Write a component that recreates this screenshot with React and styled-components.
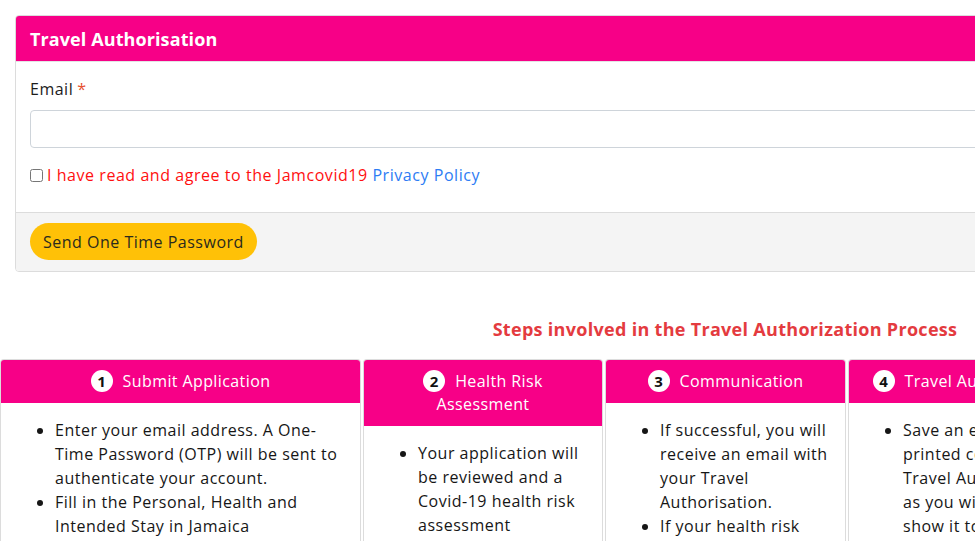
import React from "react";
import styled, { createGlobalStyle } from "styled-components";

const GlobalStyle = createGlobalStyle`
  html, body { margin: 0; padding: 0; background: #fff; }
  body {
    overflow: hidden;
    font-family: "Open Sans", "Noto Sans", Arial, sans-serif;
    color: #212529;
  }
  * { box-sizing: border-box; }
`;

const Page = styled.div`
  width: 1450px;
  padding-top: 15px;
`;

const Card = styled.section`
  margin: 0 15px;
  border: 1px solid #dcdcdc;
  border-radius: 4px;
  overflow: hidden;
`;

const CardHeader = styled.header`
  background: #f70087;
  color: #fff;
  height: 45px;
  padding: 0 14px;
  display: flex;
  align-items: center;
  font-size: 18px;
  font-weight: 700;
  letter-spacing: 0.1px;
`;

const CardBody = styled.div`
  padding: 15px 14px 25px;
  border-top: 1px solid #e4e4e4;
`;

const Label = styled.label`
  display: block;
  font-size: 16px;
  line-height: 24px;
  letter-spacing: 0.5px;
  color: #1c1c1c;
  margin-bottom: 9px;
`;

const Required = styled.span`
  color: #e6502f;
  margin-left: 4px;
`;

const Input = styled.input`
  display: block;
  width: 100%;
  height: 38px;
  border: 1px solid #ced4da;
  border-radius: 4px;
  background: #fff;
`;

const CheckRow = styled.div`
  display: flex;
  align-items: center;
  margin-top: 15px;
  font-size: 16px;
  line-height: 24px;
  letter-spacing: 0.55px;
`;

const Check = styled.input`
  margin: 0 4px 0 0;
  width: 13px;
  height: 13px;
`;

const Agree = styled.span`
  color: #ff1010;
`;

const Link = styled.a`
  color: #2d7cf4;
  text-decoration: none;
`;

const CardFooter = styled.footer`
  background: #f4f4f4;
  border-top: 1px solid #dcdcdc;
  padding: 10px 14px;
  height: 59px;
`;

const PillButton = styled.button`
  background: #ffc107;
  border: none;
  border-radius: 19px;
  height: 37px;
  padding: 0 13px;
  font-family: inherit;
  font-size: 16px;
  letter-spacing: 0.5px;
  color: #2a2a1e;
  cursor: pointer;
`;

const StepsTitle = styled.h2`
  margin: 45px 0 18px;
  text-align: center;
  font-size: 18px;
  font-weight: 700;
  color: #e43b3f;
  letter-spacing: 0.3px;
`;

const StepsRow = styled.div`
  display: flex;
  gap: 2px;
  align-items: flex-start;
`;

const Step = styled.div`
  width: ${(p) => p.$w}px;
  flex: none;
  border: 1px solid #dcdcdc;
  border-bottom: none;
  border-radius: 4px 4px 0 0;
  overflow: hidden;
  min-height: 300px;
`;

const StepHeader = styled.div`
  background: #f70087;
  color: #fff;
  padding: 10px 12px;
  text-align: center;
  font-size: 16px;
  line-height: 23px;
  letter-spacing: 0.4px;
`;

const Num = styled.span`
  display: inline-flex;
  align-items: center;
  justify-content: center;
  width: 22px;
  height: 22px;
  border-radius: 50%;
  background: #fff;
  color: #111;
  font-weight: 700;
  font-size: 15px;
  letter-spacing: 0;
  margin-right: 10px;
  vertical-align: top;
  line-height: 1;
`;

const StepBody = styled.ul`
  margin: 0;
  padding: 15px 14px 0 54px;
  font-size: 16px;
  line-height: 24px;
  letter-spacing: 0.5px;
  color: #161616;
`;

const steps = [
  {
    n: 1,
    title: "Submit Application",
    w: 361,
    items: [
      "Enter your email address. A One-Time Password (OTP) will be sent to authenticate your account.",
      "Fill in the Personal, Health and Intended Stay in Jamaica information sections of the form.",
    ],
  },
  {
    n: 2,
    title: "Health Risk Assessment",
    w: 240,
    items: [
      "Your application will be reviewed and a Covid-19 health risk assessment conducted.",
    ],
  },
  {
    n: 3,
    title: "Communication",
    w: 241,
    items: [
      "If successful, you will receive an email with your Travel Authorisation.",
      "If your health risk assessment indicates otherwise, you will be contacted.",
    ],
  },
  {
    n: 4,
    title: "Travel Authorisation",
    w: 240,
    items: [
      "Save an electronic or printed copy of your Travel Authorisation as you will need to show it to officials.",
    ],
  },
];

export default function App() {
  return (
    <>
      <GlobalStyle />
      <Page>
        <Card>
          <CardHeader>Travel Authorisation</CardHeader>
          <CardBody>
            <Label htmlFor="email">
              Email<Required>*</Required>
            </Label>
            <Input id="email" type="email" />
            <CheckRow>
              <Check type="checkbox" />
              <Agree>I have read and agree to the Jamcovid19</Agree>
              &nbsp;<Link href="#">Privacy Policy</Link>
            </CheckRow>
          </CardBody>
          <CardFooter>
            <PillButton>Send One Time Password</PillButton>
          </CardFooter>
        </Card>
        <StepsTitle>Steps involved in the Travel Authorization Process</StepsTitle>
        <StepsRow>
          {steps.map((s) => (
            <Step key={s.n} $w={s.w}>
              <StepHeader>
                <Num>{s.n}</Num>
                {s.title}
              </StepHeader>
              <StepBody>
                {s.items.map((it) => (
                  <li key={it}>{it}</li>
                ))}
              </StepBody>
            </Step>
          ))}
        </StepsRow>
      </Page>
    </>
  );
}
